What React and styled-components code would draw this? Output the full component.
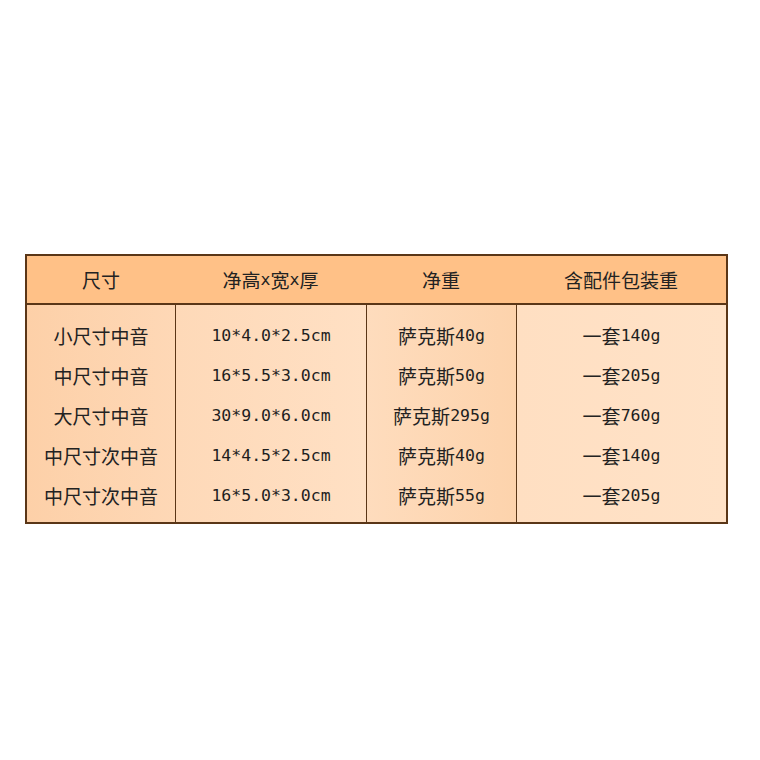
import React from 'react';
import styled, { createGlobalStyle } from 'styled-components';

const GlobalStyle = createGlobalStyle`
  html, body {
    margin: 0;
    padding: 0;
    background: #ffffff;
  }
  body {
    font-family: "Noto Sans CJK SC", "Noto Sans", sans-serif;
    color: #222;
  }
`;

const Page = styled.div`
  width: 760px;
  height: 760px;
  padding: 254px 0 0 25px;
  box-sizing: border-box;
`;

const Table = styled.div`
  display: grid;
  grid-template-columns: 148px 191px 150px 210px;
  width: 703px;
  box-sizing: border-box;
  border: 2px solid #5a3617;
`;

const HeadCell = styled.div`
  height: 47px;
  display: flex;
  align-items: center;
  justify-content: center;
  background: #ffc187;
  border-bottom: 2px solid #5a3617;
  font-size: 19px;
  color: #222;
`;

const Column = styled.div`
  display: flex;
  flex-direction: column;
  padding: 10px 0 7px;
  background: ${(p) => p.$bg};
  border-left: ${(p) => (p.$first ? 'none' : '1.5px solid #5a3617')};
`;

const Line = styled.div`
  height: 40px;
  display: flex;
  align-items: center;
  justify-content: center;
  font-size: 19px;
  color: #222;
  white-space: nowrap;
`;

const Num = styled.span`
  font-family: "DejaVu Sans Mono", "Liberation Mono", monospace;
  font-size: 16.5px;
  color: #1e1e1e;
`;

const headers = ['尺寸', '净高x宽x厚', '净重', '含配件包装重'];

const rows = [
  ['小尺寸中音', '10*4.0*2.5cm', '40g', '140g'],
  ['中尺寸中音', '16*5.5*3.0cm', '50g', '205g'],
  ['大尺寸中音', '30*9.0*6.0cm', '295g', '760g'],
  ['中尺寸次中音', '14*4.5*2.5cm', '40g', '140g'],
  ['中尺寸次中音', '16*5.0*3.0cm', '55g', '205g'],
];

const backgrounds = [
  'linear-gradient(90deg, #fdd0a8, #fed8b6)',
  'linear-gradient(90deg, #fed9b8, #ffe0c4)',
  'linear-gradient(90deg, #fedcbd, #fdd3ac)',
  'linear-gradient(90deg, #ffdfc2, #ffe2c7)',
];

const renderHeader = (text) => {
  if (text === '净高x宽x厚') {
    return (
      <>
        净高<Num>x</Num>宽<Num>x</Num>厚
      </>
    );
  }
  return text;
};

const App = () => {
  return (
    <Page>
      <GlobalStyle />
      <Table>
        {headers.map((h, i) => (
          <HeadCell key={i}>{renderHeader(h)}</HeadCell>
        ))}
        <Column $first $bg={backgrounds[0]}>
          {rows.map((r, i) => (
            <Line key={i}>{r[0]}</Line>
          ))}
        </Column>
        <Column $bg={backgrounds[1]}>
          {rows.map((r, i) => (
            <Line key={i}>
              <Num>{r[1]}</Num>
            </Line>
          ))}
        </Column>
        <Column $bg={backgrounds[2]}>
          {rows.map((r, i) => (
            <Line key={i}>
              萨克斯<Num>{r[2]}</Num>
            </Line>
          ))}
        </Column>
        <Column $bg={backgrounds[3]}>
          {rows.map((r, i) => (
            <Line key={i}>
              一套<Num>{r[3]}</Num>
            </Line>
          ))}
        </Column>
      </Table>
    </Page>
  );
};

export default App;
